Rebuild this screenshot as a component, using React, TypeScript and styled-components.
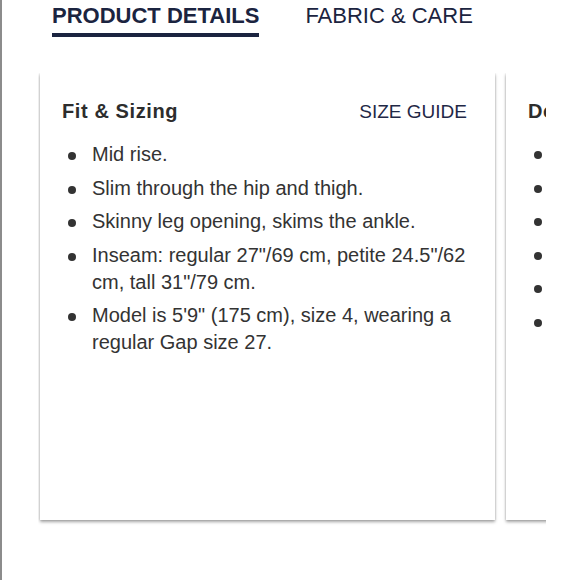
import styled, { createGlobalStyle } from 'styled-components'

const GlobalStyle = createGlobalStyle`
	html,
	body {
		margin: 0;
		padding: 0;
		background: #ffffff;
	}
	body {
		font-family: 'Liberation Sans', Arial, Helvetica, sans-serif;
	}
`

const Page = styled.div`
	height: 580px;
	box-sizing: border-box;
	border-left: 2px solid #8c8c8c;
	padding: 4px 0 0 38px;
	overflow: hidden;
`

const TabBar = styled.div`
	display: flex;
	gap: 46px;
	margin-left: 12px;
`

const Tab = styled.div<{ active?: boolean }>`
	font-size: 22px;
	line-height: 24px;
	font-weight: ${props => (props.active ? 700 : 400)};
	color: #1b2440;
	padding-bottom: 5px;
	border-bottom: 4px solid ${props => (props.active ? '#1b2440' : 'transparent')};
	cursor: pointer;
`

const Carousel = styled.div`
	width: 508px;
	margin: 36px 0 0 -2px;
	padding: 0 0 8px 2px;
	box-sizing: border-box;
	overflow: hidden;
`

const Track = styled.div`
	display: flex;
	gap: 11px;
`

const Card = styled.div`
	flex: 0 0 455px;
	height: 447px;
	box-sizing: border-box;
	background: #ffffff;
	padding: 26px 28px 0 22px;
	box-shadow:
		0 2px 3px rgba(0, 0, 0, 0.35),
		0 0 2px rgba(0, 0, 0, 0.15);
`

const CardHeader = styled.div`
	display: flex;
	justify-content: space-between;
	align-items: baseline;
	margin-bottom: 17px;
`

const CardTitle = styled.div`
	font-size: 20px;
	line-height: 24px;
	font-weight: 700;
	letter-spacing: 0.6px;
	color: #2d2d2d;
`

const SizeGuide = styled.div`
	font-size: 19px;
	line-height: 24px;
	color: #1f2846;
	cursor: pointer;
`

const List = styled.ul`
	list-style: none;
	margin: 0;
	padding: 0;
	display: flex;
	flex-direction: column;
	gap: 6.5px;
`

const Item = styled.li`
	display: flex;
	font-size: 20px;
	line-height: 27px;
	color: #333333;
	white-space: nowrap;
`

const ItemText = styled.span`
	white-space: normal;
`

const Dot = styled.span`
	flex: 0 0 30px;

	&::before {
		content: '';
		display: block;
		width: 8px;
		height: 8px;
		margin: 11px 0 0 6px;
		border-radius: 50%;
		background: #333333;
	}
`

const fitItems = [
	'Mid rise.',
	'Slim through the hip and thigh.',
	'Skinny leg opening, skims the ankle.',
	'Inseam: regular 27"/69 cm, petite 24.5"/62 cm, tall 31"/79 cm.',
	'Model is 5\'9" (175 cm), size 4, wearing a regular Gap size 27.',
]

const detailItems = [
	'Soft denim with stretch.',
	'Five-pocket styling.',
	'Button closure, zip fly.',
	'Whiskering and fading.',
	'Raw hem.',
	'Imported.',
]

const InfoCard = ({ title, items, guide }: { title: string; items: string[]; guide?: boolean }) => (
	<Card>
		<CardHeader>
			<CardTitle>{title}</CardTitle>
			{guide && <SizeGuide>SIZE GUIDE</SizeGuide>}
		</CardHeader>
		<List>
			{items.map(text => (
				<Item key={text}>
					<Dot />
					<ItemText>{text}</ItemText>
				</Item>
			))}
		</List>
	</Card>
)

export default function App() {
	return (
		<>
			<GlobalStyle />
			<Page>
				<TabBar>
					<Tab active>PRODUCT DETAILS</Tab>
					<Tab>FABRIC &amp; CARE</Tab>
				</TabBar>
				<Carousel>
					<Track>
						<InfoCard title="Fit & Sizing" items={fitItems} guide />
						<InfoCard title="Details" items={detailItems} />
					</Track>
				</Carousel>
			</Page>
		</>
	)
}
